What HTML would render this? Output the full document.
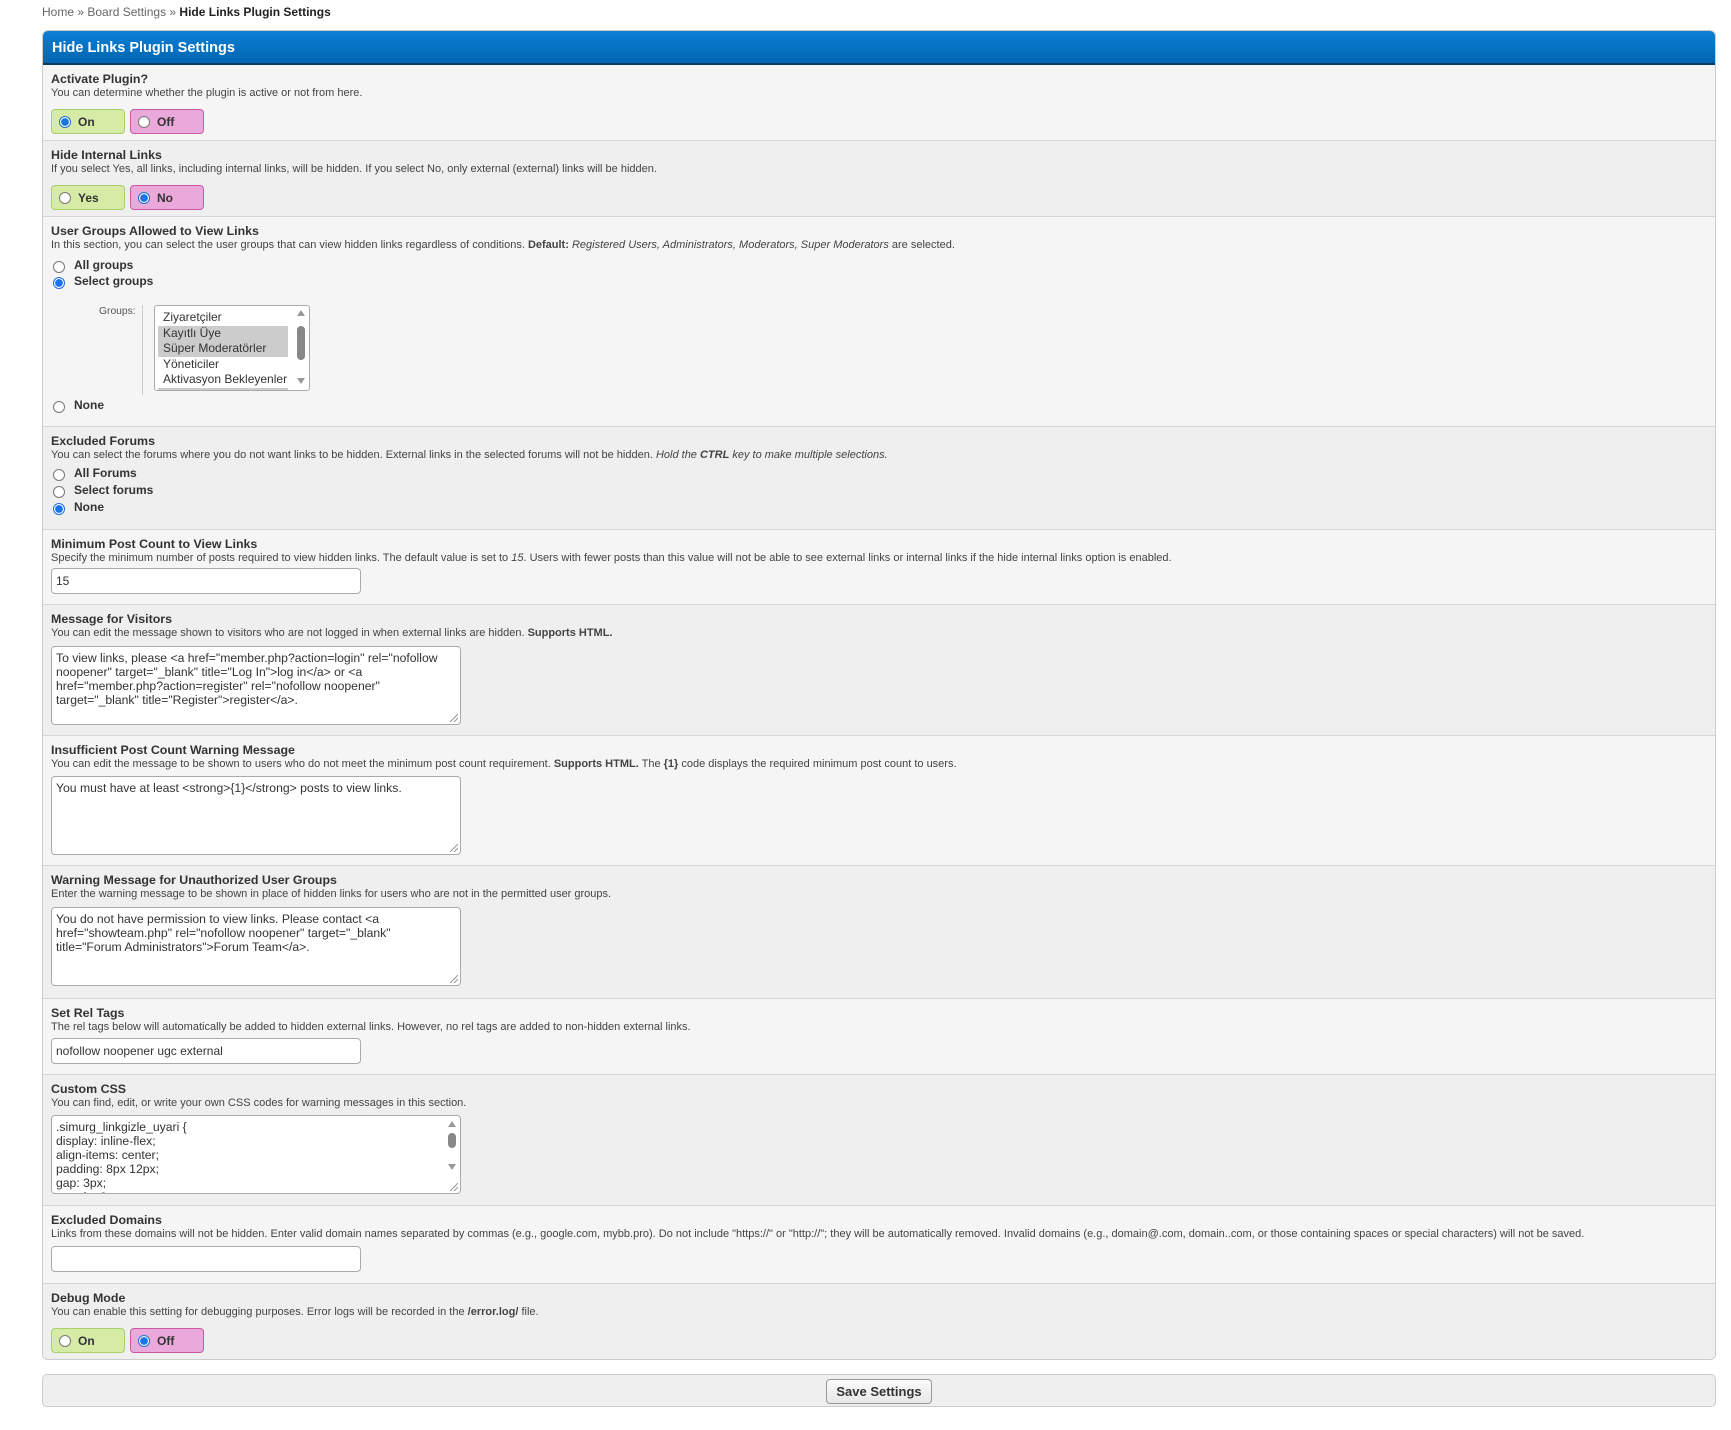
<!DOCTYPE html>
<html><head><meta charset="utf-8"><style>
*{box-sizing:border-box;margin:0;padding:0}
body{width:1731px;height:1430px;background:#fff;font-family:"Liberation Sans",Arial,sans-serif;color:#333;position:relative;overflow:hidden}
.bc{position:absolute;left:42px;top:5px;font-size:12px;color:#666}
.bc b{color:#222}
.box{position:absolute;left:42px;top:30px;width:1674px;height:1330px;border:1px solid #ccc;border-radius:6px;background:#f5f5f5;overflow:hidden}
.hd{position:absolute;left:0;top:0;width:100%;height:34px;background:linear-gradient(#0b7fd6,#0066b0);border-bottom:2px solid #0b3a63;color:#fff;font-weight:bold;font-size:14.5px;padding:9px 0 0 9px}
.row{position:absolute;left:0;width:100%;border-top:1px solid #d6d6d6}
.r0{background:#f5f5f5}.r1{background:#efefef}
.t{position:absolute;left:8px;top:6px;font-size:12.4px;font-weight:bold;color:#333;line-height:16px}
.d{position:absolute;left:8px;top:21px;font-size:11px;color:#444;line-height:14px;white-space:nowrap}
.rb{position:absolute;height:25px;width:74px;border-radius:4px;font-size:12px;font-weight:bold;color:#333;padding:5px 0 0 26px}
.g{background:#d6eca6;border:1px solid #a9cf6e}
.p{background:#eba8da;border:1px solid #c85aa2}
.rd{position:absolute;width:12px;height:12px;border-radius:50%;border:1px solid #777;background:#fff}
.rd.on{border:1px solid #1a6fd8;background:radial-gradient(circle,#1a73e8 0,#1a73e8 3.5px,#fff 4.2px)}
.rb .rd{left:7px;top:6px}
.opt{position:absolute;left:31px;font-size:12px;font-weight:bold;color:#333}
.opt .rd{left:-21px;top:3px}
.in{position:absolute;left:8px;width:310px;height:26px;border:1px solid #aaa;border-radius:4px;background:#fff;font-size:12px;padding:5px 4px}
.ta{position:absolute;left:8px;width:410px;height:79px;border:1px solid #aaa;border-radius:4px;background:#fff;font-size:12.2px;line-height:14px;padding:4px 4px;overflow:hidden}
.rs{position:absolute;right:2px;bottom:2px;width:8px;height:8px;background:linear-gradient(135deg,transparent 45%,#999 45%,#999 55%,transparent 55%,transparent 70%,#999 70%,#999 80%,transparent 80%)}
.sv{position:absolute;left:42px;top:1374px;width:1674px;height:33px;border:1px solid #ccc;border-radius:5px;background:#efefef}
.btn{position:absolute;left:783px;top:4px;width:106px;height:25px;border:1px solid #999;border-radius:4px;background:linear-gradient(#fafafa,#e8e8e8);font-weight:bold;font-size:13px;color:#333;text-align:center;padding-top:4px}
</style></head><body>
<div class="bc">Home » Board Settings » <b>Hide Links Plugin Settings</b></div>
<div class="box">
<div class="hd">Hide Links Plugin Settings</div>

<div class="row r0" style="top:34px;height:75px;border-top:none">
 <div class="t">Activate Plugin?</div>
 <div class="d">You can determine whether the plugin is active or not from here.</div>
 <div class="rb g" style="left:8px;top:44px"><span class="rd on"></span>On</div>
 <div class="rb p" style="left:87px;top:44px"><span class="rd"></span>Off</div>
</div>

<div class="row r1" style="top:109px;height:76px">
 <div class="t">Hide Internal Links</div>
 <div class="d">If you select Yes, all links, including internal links, will be hidden. If you select No, only external (external) links will be hidden.</div>
 <div class="rb g" style="left:8px;top:44px"><span class="rd"></span>Yes</div>
 <div class="rb p" style="left:87px;top:44px"><span class="rd on"></span>No</div>
</div>

<div class="row r0" style="top:185px;height:210px">
 <div class="t">User Groups Allowed to View Links</div>
 <div class="d">In this section, you can select the user groups that can view hidden links regardless of conditions. <b>Default:</b> <i>Registered Users, Administrators, Moderators, Super Moderators</i> are selected.</div>
 <div class="opt" style="top:41px"><span class="rd"></span>All groups</div>
 <div class="opt" style="top:57px"><span class="rd on"></span>Select groups</div>
 <div style="position:absolute;left:56px;top:89px;font-size:10.3px;color:#555">Groups:</div>
 <div style="position:absolute;left:99px;top:88px;width:1px;height:90px;background:#ccc"></div>
 <div style="position:absolute;left:111px;top:88px;width:156px;height:86px;border:1px solid #aaa;border-radius:3px;background:#fff;overflow:hidden;font-size:12px;line-height:15.5px;padding-top:4px">
  <div style="padding-left:5px;margin-left:3px">Ziyaretçiler</div>
  <div style="padding-left:5px;margin-left:3px;width:130px;background:#ccc">Kayıtlı Üye</div>
  <div style="padding-left:5px;margin-left:3px;width:130px;background:#ccc">Süper Moderatörler</div>
  <div style="padding-left:5px;margin-left:3px">Yöneticiler</div>
  <div style="padding-left:5px;margin-left:3px">Aktivasyon Bekleyenler</div>
  <div style="padding-left:5px;margin-left:3px;width:130px;background:#ccc">&nbsp;</div>
  <div style="position:absolute;right:4px;top:4px;width:0;height:0;border:4px solid transparent;border-bottom:6px solid #999;border-top:none"></div>
  <div style="position:absolute;right:4px;top:20px;width:8px;height:34px;border-radius:4px;background:#888"></div>
  <div style="position:absolute;right:4px;bottom:6px;width:0;height:0;border:4px solid transparent;border-top:6px solid #999;border-bottom:none"></div>
 </div>
 <div class="opt" style="top:181px"><span class="rd"></span>None</div>
</div>

<div class="row r1" style="top:395px;height:103px">
 <div class="t">Excluded Forums</div>
 <div class="d">You can select the forums where you do not want links to be hidden. External links in the selected forums will not be hidden. <i>Hold the <b>CTRL</b> key to make multiple selections.</i></div>
 <div class="opt" style="top:39px"><span class="rd"></span>All Forums</div>
 <div class="opt" style="top:56px"><span class="rd"></span>Select forums</div>
 <div class="opt" style="top:73px"><span class="rd on"></span>None</div>
</div>

<div class="row r0" style="top:498px;height:75px">
 <div class="t">Minimum Post Count to View Links</div>
 <div class="d">Specify the minimum number of posts required to view hidden links. The default value is set to <i>15</i>. Users with fewer posts than this value will not be able to see external links or internal links if the hide internal links option is enabled.</div>
 <div class="in" style="top:38px">15</div>
</div>

<div class="row r1" style="top:573px;height:131px">
 <div class="t">Message for Visitors</div>
 <div class="d">You can edit the message shown to visitors who are not logged in when external links are hidden. <b>Supports HTML.</b></div>
 <div class="ta" style="top:41px">To view links, please &lt;a href="member.php?action=login" rel="nofollow noopener" target="_blank" title="Log In"&gt;log in&lt;/a&gt; or &lt;a href="member.php?action=register" rel="nofollow noopener" target="_blank" title="Register"&gt;register&lt;/a&gt;.<span class="rs"></span></div>
</div>

<div class="row r0" style="top:704px;height:130px">
 <div class="t">Insufficient Post Count Warning Message</div>
 <div class="d">You can edit the message to be shown to users who do not meet the minimum post count requirement. <b>Supports HTML.</b> The <b>{1}</b> code displays the required minimum post count to users.</div>
 <div class="ta" style="top:40px">You must have at least &lt;strong&gt;{1}&lt;/strong&gt; posts to view links.<span class="rs"></span></div>
</div>

<div class="row r1" style="top:834px;height:133px">
 <div class="t">Warning Message for Unauthorized User Groups</div>
 <div class="d">Enter the warning message to be shown in place of hidden links for users who are not in the permitted user groups.</div>
 <div class="ta" style="top:41px">You do not have permission to view links. Please contact &lt;a<br>href="showteam.php" rel="nofollow noopener" target="_blank"<br>title="Forum Administrators"&gt;Forum Team&lt;/a&gt;.<span class="rs"></span></div>
</div>

<div class="row r0" style="top:967px;height:76px">
 <div class="t">Set Rel Tags</div>
 <div class="d">The rel tags below will automatically be added to hidden external links. However, no rel tags are added to non-hidden external links.</div>
 <div class="in" style="top:39px">nofollow noopener ugc external</div>
</div>

<div class="row r1" style="top:1043px;height:131px">
 <div class="t">Custom CSS</div>
 <div class="d">You can find, edit, or write your own CSS codes for warning messages in this section.</div>
 <div class="ta" style="top:40px">.simurg_linkgizle_uyari {<br>display: inline-flex;<br>align-items: center;<br>padding: 8px 12px;<br>gap: 3px;<br>margin: 0;
  <div style="position:absolute;right:4px;top:5px;width:0;height:0;border:4px solid transparent;border-bottom:6px solid #999;border-top:none"></div>
  <div style="position:absolute;right:4px;top:17px;width:8px;height:15px;border-radius:4px;background:#888"></div>
  <div style="position:absolute;right:4px;top:48px;width:0;height:0;border:4px solid transparent;border-top:6px solid #999;border-bottom:none"></div>
  <span class="rs"></span></div>
</div>

<div class="row r0" style="top:1174px;height:78px">
 <div class="t">Excluded Domains</div>
 <div class="d">Links from these domains will not be hidden. Enter valid domain names separated by commas (e.g., google.com, mybb.pro). Do not include "https://" or "http://"; they will be automatically removed. Invalid domains (e.g., domain@.com, domain..com, or those containing spaces or special characters) will not be saved.</div>
 <div class="in" style="top:40px"></div>
</div>

<div class="row r1" style="top:1252px;height:80px">
 <div class="t">Debug Mode</div>
 <div class="d">You can enable this setting for debugging purposes. Error logs will be recorded in the <b>/error.log/</b> file.</div>
 <div class="rb g" style="left:8px;top:44px"><span class="rd"></span>On</div>
 <div class="rb p" style="left:87px;top:44px"><span class="rd on"></span>Off</div>
</div>
</div>
<div class="sv"><div class="btn">Save Settings</div></div>
</body></html>
